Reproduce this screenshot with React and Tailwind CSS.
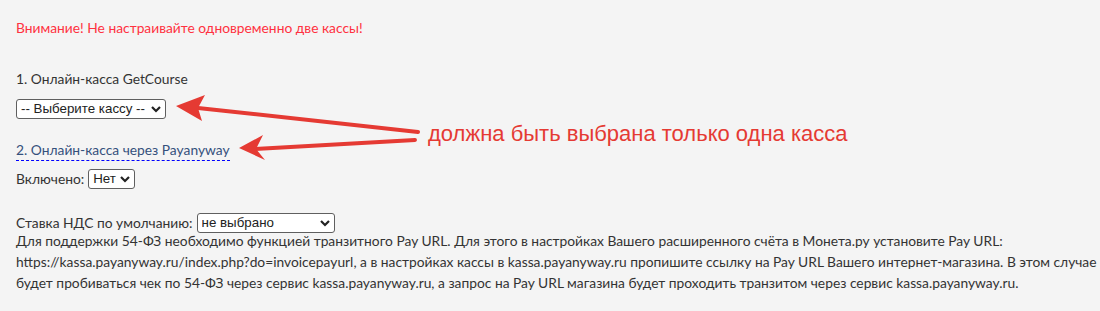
import React, { useState } from "react";

const selectCls =
  "appearance-none h-5 bg-white border border-[#5f5f5f] rounded-[3px] pl-[4px] pr-4 text-[13.33px] leading-[18px] text-[#222] font-['Liberation_Sans',Arial,sans-serif] bg-no-repeat bg-[right_4px_center] bg-[length:10px_8px]";

const chevron =
  "url(\"data:image/svg+xml;utf8,<svg xmlns='http://www.w3.org/2000/svg' viewBox='0 0 10 8'><path d='M1 2l4 4 4-4' fill='none' stroke='%23222' stroke-width='2.2'/></svg>\")";

function Select({ value, onChange, options, className }) {
  return (
    <select
      value={value}
      onChange={(e) => onChange(e.target.value)}
      className={`${selectCls} ${className}`}
      style={{ backgroundImage: chevron }}
    >
      {options.map((o) => (
        <option key={o}>{o}</option>
      ))}
    </select>
  );
}

export default function App() {
  const [kassa, setKassa] = useState("-- Выберите кассу --");
  const [enabled, setEnabled] = useState("Нет");
  const [vat, setVat] = useState("не выбрано");

  return (
    <div className="relative min-h-[311px] overflow-hidden bg-[#f4f4f4] text-[#333] font-['Lato',sans-serif] text-[13.8px]">
      <div className="pl-4 pt-[18px]">
        <p className="leading-5 text-[#ff3140]">
          Внимание! Не настраивайте одновременно две кассы!
        </p>

        <p className="mt-[31px] leading-5">1. Онлайн-касса GetCourse</p>
        <div className="mt-[10px] flex">
          <Select
            value={kassa}
            onChange={setKassa}
            options={["-- Выберите кассу --", "GetCourse Касса"]}
            className="w-[150px]"
          />
        </div>

        <div className="mt-[21px] flex">
          <a className="leading-5 text-[#34507c] border-b border-dashed border-[#0000ff] cursor-pointer">
            2. Онлайн-касса через Payanyway
          </a>
        </div>
        <div className="mt-[8px] flex items-center gap-1">
          <span>Включено:</span>
          <Select
            value={enabled}
            onChange={setEnabled}
            options={["Нет", "Да"]}
            className="w-[47px]"
          />
        </div>

        <div className="mt-[23px] flex items-center gap-1">
          <span>Ставка НДС по умолчанию:</span>
          <Select
            value={vat}
            onChange={setVat}
            options={["не выбрано", "без НДС", "НДС 20%", "НДС 10%"]}
            className="w-[138px]"
          />
        </div>
        <p className="leading-[21px] -mt-[3px] whitespace-nowrap">
          Для поддержки 54-ФЗ необходимо функцией транзитного Pay URL. Для этого в настройках Вашего расширенного счёта в Монета.ру установите Pay URL:
          <br />
          https://kassa.payanyway.ru/index.php?do=invoicepayurl, а в настройках кассы в kassa.payanyway.ru пропишите ссылку на Pay URL Вашего интернет-магазина. В этом случае
          <br />
          будет пробиваться чек по 54-ФЗ через сервис kassa.payanyway.ru, а запрос на Pay URL магазина будет проходить транзитом через сервис kassa.payanyway.ru.
        </p>
      </div>

      {/* annotation */}
      <svg
        className="absolute left-0 top-0 pointer-events-none"
        width="1100"
        height="311"
        viewBox="0 0 1100 311"
      >
        <g stroke="#e53a33" strokeWidth="4" strokeLinecap="round" fill="none">
          <line x1="418" y1="132" x2="198" y2="108" />
          <line x1="415" y1="140" x2="255" y2="149" />
        </g>
        <g fill="#e53a33">
          <path d="M176 106 L205 95 L198 108 L202 121 Z" />
          <path d="M239 148 L263 135 L256 149 L265 160 Z" />
        </g>
      </svg>
      <span className="absolute left-[428px] top-[120px] text-[22px] leading-[28px] text-[#e53a33] font-['Liberation_Sans',Arial,sans-serif]">
        должна быть выбрана только одна касса
      </span>
    </div>
  );
}
